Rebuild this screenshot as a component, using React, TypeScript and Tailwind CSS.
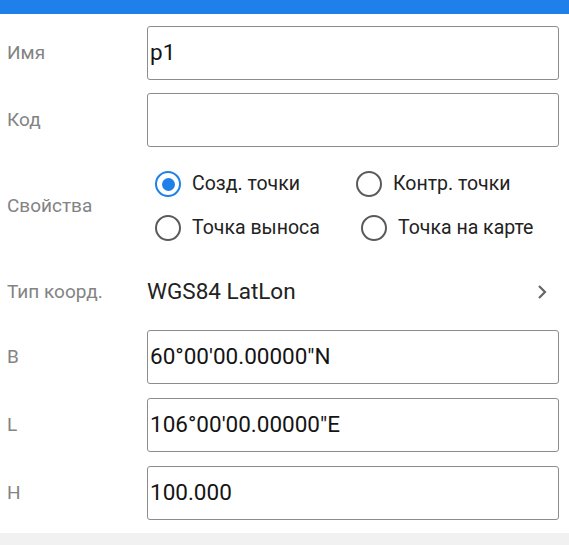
import React from "react";

type RadioItem = { label: string; checked?: boolean };

function Radio({ label, checked }: RadioItem) {
  return (
    <div className="flex items-center">
      <span
        className={`flex h-[26px] w-[26px] items-center justify-center rounded-full border-[2.5px] ${
          checked ? "border-[#1f80ea]" : "border-[#5a5a5a]"
        }`}
      >
        {checked ? <span className="h-[13px] w-[13px] rounded-full bg-[#1f80ea]" /> : null}
      </span>
      <span className="ml-[11px] text-[19.5px] text-[#222]">{label}</span>
    </div>
  );
}

function FieldRow({ label, value, className }: { label: string; value: string; className?: string }) {
  return (
    <div className={`flex items-center ${className ?? ""}`}>
      <div className="w-[147px] pl-[7px] text-[19px] text-[#838383]">{label}</div>
      <div className="mr-[10px] flex h-[54px] flex-1 items-center rounded-[3px] border-[1.5px] border-[#8c8c8c] pl-[2px] text-[22.5px] text-[#141414]">
        {value}
      </div>
    </div>
  );
}

export default function App() {
  return (
    <div
      className="flex h-[545px] w-[569px] flex-col overflow-hidden bg-white"
      style={{ fontFamily: "Roboto, 'Noto Sans', sans-serif" }}
    >
      <div className="h-[14px] w-full bg-[#1f80ea]" />

      <FieldRow label="Имя" value="p1" className="mt-[12px]" />
      <FieldRow label="Код" value="" className="mt-[13px]" />

      <div className="mt-[15px] flex items-center">
        <div className="w-[147px] pl-[7px] text-[19px] text-[#838383]">Свойства</div>
        <div className="flex flex-col pl-[8px]">
          <div className="flex h-[44px] items-center">
            <div className="w-[201px]">
              <Radio label="Созд. точки" checked />
            </div>
            <Radio label="Контр. точки" />
          </div>
          <div className="flex h-[44px] items-center">
            <div className="w-[206px]">
              <Radio label="Точка выноса" />
            </div>
            <Radio label="Точка на карте" />
          </div>
        </div>
      </div>

      <div className="mt-[20px] flex h-[44px] items-center">
        <div className="w-[147px] pl-[7px] text-[19px] text-[#838383]">Тип коорд.</div>
        <div className="flex-1 text-[22.5px] text-[#222]">WGS84 LatLon</div>
        <svg width="12" height="16" viewBox="0 0 12 16" className="mr-[21px]">
          <path d="M3 2 L9 8 L3 14" fill="none" stroke="#666" strokeWidth="2.2" />
        </svg>
      </div>

      <FieldRow label="B" value={'60°00\'00.00000"N'} className="mt-[16px]" />
      <FieldRow label="L" value={'106°00\'00.00000"E'} className="mt-[14px]" />
      <FieldRow label="H" value="100.000" className="mt-[14px]" />

      <div className="mt-[13px] flex-1 bg-[#f1f1f1]" />
    </div>
  );
}
